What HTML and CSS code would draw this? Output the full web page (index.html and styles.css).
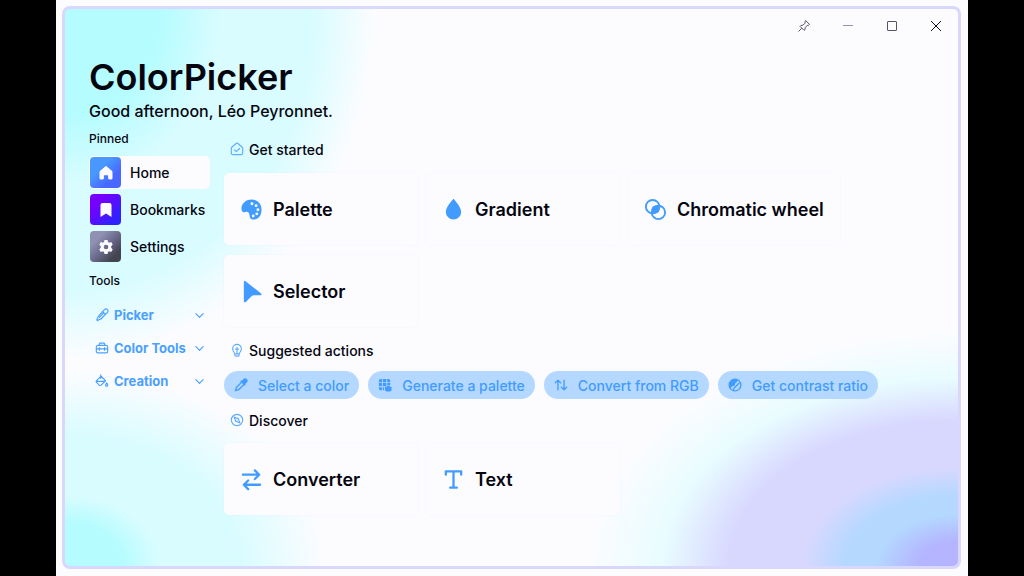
FILE: index.html
```html
<!DOCTYPE html>
<html lang="en">
<head>
<meta charset="utf-8">
<meta name="viewport" content="width=device-width, initial-scale=1">
<title>ColorPicker</title>
<link rel="stylesheet" href="styles.css">
</head>
<body>
<div class="desktop">
<div class="window">
  <div class="titlebar">
    <button class="caption" aria-label="Pin window"><svg viewBox="0 0 14 14"><path d="M8.6 1.5l3.9 3.9-1.1.9-1.2.1-2 2.2-.2 2-1 .7-3.9-3.9.9-1 2-.2 2-2 .1-1.5zM4.9 9.1L1.5 12.5"/></svg></button>
    <button class="caption light" aria-label="Minimize"><svg viewBox="0 0 14 14"><path d="M2 6.5h10"/></svg></button>
    <button class="caption" aria-label="Maximize"><svg viewBox="0 0 14 14"><rect x="2.5" y="2.5" width="9" height="9" rx=".5"/></svg></button>
    <button class="caption dark" aria-label="Close"><svg viewBox="0 0 14 14"><path d="M2 2l10 10M12 2L2 12"/></svg></button>
  </div>
  <header class="intro">
    <h1 class="app-name">ColorPicker</h1>
    <p class="greeting">Good afternoon, Léo Peyronnet.</p>
  </header>
  <div class="layout">
    <nav class="sidebar">
      <h2 class="side-title">Pinned</h2>
      <div class="pages">
        <button class="page active" aria-current="page"><span class="tile home"><svg viewBox="0 0 16 16"><path d="M7.2 1.4a1.2 1.2 0 0 1 1.6 0l5 4.3c.4.4.7.9.7 1.5v6.1c0 .7-.5 1.2-1.2 1.2h-2c-.7 0-1.2-.5-1.2-1.2v-3.1H5.900v3.100c0 .7-.5 1.200-1.200 1.200h-2c-.7 0-1.200-.5-1.200-1.200V7.200c0-.6.3-1.100.7-1.500z"/></svg></span>Home</button>
        <button class="page"><span class="tile bookmarks"><svg viewBox="0 0 16 16"><path d="M4.500 1h7A2 2 0 0 1 13.500 3v12L8 11.500 2.500 15V3a2 2 0 0 1 2-2z"/></svg></span>Bookmarks</button>
        <button class="page"><span class="tile settings"><svg viewBox="0 0 16 16"><path fill-rule="evenodd" d="M6.500 1h3l.5 2.100 1.100.6 2.100-.7 1.500 2.600L13.200 7.200v1.600l1.500 1.600-1.500 2.600-2.100-.7-1.100.6-.5 2.100h-3L6 12.900l-1.100-.6-2.100.7-1.500-2.600 1.500-1.600V7.200L1.300 5.600 2.800 3l2.100.7L6 3.100zM8 5.700a2.300 2.300 0 1 0 0 4.600 2.300 2.300 0 0 0 0-4.600z"/></svg></span>Settings</button>
      </div>
      <h2 class="side-title">Tools</h2>
      <div class="groups">
        <button class="group"><svg class="line" viewBox="0 0 16 16"><path d="M9.200 3.600l1.700-1.800a2.300 2.300 0 0 1 3.300 3.300l-1.800 1.700-5.300 5.500c-.8.8-2 .7-2.700 1l-1.500 1.200-1-1 1.100-1.700c.4-.8.200-1.800 1-2.600zM8.500 3.900l3.600 3.600M9.500 6L5 10.600"/></svg><span class="group-name">Picker</span><svg class="line chevron" viewBox="0 0 10 10"><path d="M1 3l4 4 4-4"/></svg></button>
        <button class="group"><svg class="line" viewBox="0 0 16 16"><path d="M5 5V3.500c0-.6.4-1 1-1h4c.6 0 1 .4 1 1V5M3.500 5h9A2 2 0 0 1 14.500 7v5a1.500 1.500 0 0 1-1.500 1.500H3A1.500 1.500 0 0 1 1.500 12V7a2 2 0 0 1 2-2zM1.500 9h13M5 7.500v3M11 7.500v3"/></svg><span class="group-name">Color Tools</span><svg class="line chevron" viewBox="0 0 10 10"><path d="M1 3l4 4 4-4"/></svg></button>
        <button class="group"><svg class="line" viewBox="0 0 16 16"><path d="M6.500 1v4M7 2.500l5 5.200-5 5c-.7.6-1.300.6-2 0L1.800 9.500c-.6-.6-.6-1.300 0-2L7 2.500M1.800 8.500h9.500M13.300 10.200c1.600 2.200 1.700 3.800 0 3.800s-1.600-1.600 0-3.800z"/></svg><span class="group-name">Creation</span><svg class="line chevron" viewBox="0 0 10 10"><path d="M1 3l4 4 4-4"/></svg></button>
      </div>
    </nav>
    <main class="content">
      <h2 class="section-title"><svg class="line" viewBox="0 0 16 16"><path d="M7 1.700a1.600 1.600 0 0 1 2 0l4.700 4c.5.400.8 1 .8 1.600v5.200a2 2 0 0 1-2 2h-9a2 2 0 0 1-2-2V7.300c0-.6.3-1.200.8-1.600zM5 9l2.200 2 3.800-3.600"/></svg>Get started</h2>
      <div class="cards">
        <button class="card"><svg viewBox="0 0 24 24"><path fill-rule="evenodd" d="M1.500 11C1.500 5 7 1.500 12 1.500c6 0 10.500 4.500 10.500 10.500 0 6.500-3.500 10.500-8 10.500-6 0-3.500-5-5.500-7.200-1.800-2-3.500 0-5.500-.5-1.400-.4-2-2-2-3.800zM12.500 4.500a1.500 1.500 0 1 0 0 3 1.500 1.500 0 0 0 0-3zM16.800 6.500a1.500 1.500 0 1 0 0 3 1.500 1.500 0 0 0 0-3zM18.700 10.800a1.500 1.500 0 1 0 0 3 1.500 1.500 0 0 0 0-3zM17.500 15a1.500 1.500 0 1 0 0 3 1.500 1.500 0 0 0 0-3zM13.800 17.300a1.500 1.500 0 1 0 0 3 1.500 1.500 0 0 0 0-3z"/></svg>Palette</button>
        <button class="card"><svg viewBox="0 0 24 24"><path d="M11.300 1.500c.4-.5 1-.5 1.400 0C15.500 5 20 10 20 14.500a8 8 0 0 1-16 0C4 10 8.500 5 11.300 1.500z"/></svg>Gradient</button>
        <button class="card"><svg viewBox="0 0 24 24"><path d="M15.700 8.300A7 7 0 0 1 8.300 15.700 7 7 0 0 1 15.700 8.300z"/><circle cx="12" cy="12" r="4"/><g class="ring"><circle cx="9" cy="9" r="7"/><circle cx="15" cy="15" r="7"/></g></svg>Chromatic wheel</button>
        <button class="card"><svg viewBox="0 0 24 24"><path d="M4 2c0-1 1-1.400 1.800-.8L22 14c1 .8.500 2-.6 2h-6.800c-1.200 0-2 .4-2.800 1.200L6 23c-.7.800-2 .400-2-.7z"/></svg>Selector</button>
      </div>
      <h2 class="section-title"><svg class="line" viewBox="0 0 16 16"><path d="M5.500 12.500c0-1.500-2.500-3-2.500-6a5 5 0 0 1 10 0c0 3-2.500 4.500-2.500 6zM5.500 12.500v1.300c0 .7.500 1.200 1.200 1.200h2.600c.7 0 1.200-.5 1.200-1.200v-1.300M6.200 7h3.600M8 5v7"/></svg>Suggested actions</h2>
      <div class="actions">
        <button class="action"><svg viewBox="0 0 16 16"><path d="M9 3l1.800-1.800a2.600 2.600 0 0 1 3.900 3.900L13 6.900l.3 1-1 1-5.200-5.200 1-1z"/><path class="stroke" d="M8.500 5L3 10.500c-.8.800-.4 1.700-.8 2.400L1.500 14l.6.600 1.200-.7c.7-.4 1.600 0 2.300-.8L11 7.700"/></svg>Select a color</button>
        <button class="action"><svg viewBox="0 0 16 16"><path d="M1 3a2 2 0 0 1 2-2h1.500v3.500H1zM5.500 1h4v3.500h-4zM10.500 1H12a2 2 0 0 1 2 2v1.500h-3.500zM1 5.500h3.500v4H1zM5.500 5.500h4v4h-4zM10.500 5.500H14V8h-3.500zM1 10.500h3.500V14H3a2 2 0 0 1-2-2zM5.500 10.500H7V14H5.500zM8 10h7.500v3.500a2 2 0 0 1-2 2H10a2 2 0 0 1-2-2zM10.500 8.500h3v2h-3z"/></svg>Generate a palette</button>
        <button class="action"><svg viewBox="0 0 16 16"><path class="stroke" d="M4.500 13.500v-11M1.500 5.500l3-3 3 3M11.500 2.500v11M8.500 10.500l3 3 3-3"/></svg>Convert from RGB</button>
        <button class="action"><svg viewBox="0 0 16 16"><path d="M11 2A6.700 6.700 0 0 0 2.500 11.800L5 9.500c1-.6 1.500 0 2.500-1s0-2 1-2.500S11 4 11 2z"/><path class="stroke" d="M8 1.300a6.700 6.700 0 1 0 0 13.400A6.700 6.700 0 0 0 8 1.300zM6 14l1-2.500L12.500 6"/></svg>Get contrast ratio</button>
      </div>
      <h2 class="section-title"><svg class="line" viewBox="0 0 16 16"><circle cx="8" cy="8" r="6.500"/><path d="M4.700 4.700l4.800 1.700 1.800 4.900-4.800-1.800zM8 8h.1"/></svg>Discover</h2>
      <div class="cards">
        <button class="card"><svg viewBox="0 0 24 24"><path class="stroke" d="M3 7h17M15.500 2.500L20 7l-4.500 4.500M21 17.500H4M8.500 13L4 17.500 8.500 22"/></svg>Converter</button>
        <button class="card"><svg viewBox="0 0 24 24"><path class="stroke" d="M4 7V3.500h16V7M12 3.500v17M8.500 20.500h7"/></svg>Text</button>
      </div>
    </main>
  </div>
</div>
</div>
</body>
</html>
```

FILE: styles.css
```css
* { box-sizing: border-box; }
body {
  margin: 0;
  background: #000;
  color: #050510;
  font-family: Inter, "Open Sans", sans-serif;
}
h1, h2, p { margin: 0; }
button {
  padding: 0;
  border: 0;
  background: none;
  color: inherit;
  font: inherit;
  white-space: nowrap;
}
svg { flex: none; fill: currentColor; }
.line, .stroke, .ring { fill: none; stroke: currentColor; stroke-linecap: round; stroke-linejoin: round; }
.line { stroke-width: 1.3; }
.stroke { stroke-width: 1.5; }
.ring { stroke-width: 2; }

.desktop {
  display: flex;
  min-height: 100vh;
  margin: 0 56px;
  padding: 6px 7px 7px 6px;
  background: #fcfcff;
}
.window {
  flex: 1;
  border: 3px solid #d8d8ff;
  border-radius: 8px;
  background:
    radial-gradient(ellipse 370px 235px at 100% 100%, #b4b4ff 0, #b4b4ff 10%, #b4d8ff 22%, #b4d8ff 30%, #d8d8ff 42%, #d8d8ff 62%, #d8fcff88 80%, #d8fcff00 100%),
    radial-gradient(ellipse 260px 195px at 0 100%, #b4fcff 0, #b4fcff 22%, #d8fcff 36%, #d8fcff 66%, #d8fcff00 100%),
    radial-gradient(ellipse 310px 350px at 0 0, #b4fcff 0, #b4fcff 30%, #d8fcff 50%, #d8fcff 80%, #d8fcff00 100%),
    #fcfcff;
}

.titlebar { display: flex; justify-content: flex-end; }
.caption {
  display: grid;
  place-items: center;
  width: 44px;
  height: 34px;
  color: #55556a;
}
.caption svg { width: 14px; height: 14px; fill: none; stroke: currentColor; }
.caption.light { color: #9090b4; }
.caption.dark { color: #101024; }

.intro { padding: 12px 24px 0; }
.app-name { font-size: 36px; line-height: 44px; font-weight: 600; }
.greeting { font-size: 16px; line-height: 24px; font-weight: 500; }

.layout { display: flex; gap: 14px; padding: 8px 24px 0; }
.sidebar { flex: none; width: 121px; }
.side-title { font-size: 12px; line-height: 16px; font-weight: 500; }
.pages { display: grid; gap: 4px; padding: 9px 0 10px; }
.page {
  display: flex;
  align-items: center;
  gap: 9px;
  height: 33px;
  padding: 0 1px;
  border-radius: 5px;
  font-size: 14px;
  font-weight: 500;
}
.page.active { background: #fcfcff; }
.tile {
  display: grid;
  place-items: center;
  width: 31px;
  height: 31px;
  border-radius: 4px;
  color: #fcfcff;
}
.tile svg { width: 16px; height: 16px; }
.home { background: linear-gradient(135deg, #4898ff 35%, #4868ff 70%); }
.bookmarks { background: linear-gradient(135deg, #7800ff 25%, #3020ff 80%); }
.settings { background: linear-gradient(135deg, #9090b0 25%, #6c6c90 50%, #444450 80%); }

.groups { display: grid; gap: 5px; padding-top: 12px; }
.group {
  display: flex;
  align-items: center;
  gap: 5px;
  height: 28px;
  padding: 0 6px;
  color: #4aa0ff;
  font-size: 13px;
  font-weight: 700;
}
.group svg { width: 14px; height: 14px; }
.group .chevron { width: 9px; height: 9px; }
.group-name { flex: 1; text-align: left; }

.content { flex: 1; min-width: 0; }
.section-title {
  display: flex;
  align-items: center;
  gap: 5px;
  height: 20px;
  margin: 8px 0 14px;
  padding-left: 6px;
  font-size: 14px;
  font-weight: 500;
}
.section-title svg { width: 14px; height: 14px; color: #60acff; }
.cards { display: flex; flex-wrap: wrap; gap: 10px 8px; }
.card {
  display: flex;
  align-items: center;
  gap: 10px;
  min-width: 194px;
  height: 72px;
  padding: 0 16px;
  border-radius: 5px;
  background: #fcfcff;
  box-shadow: 0 0 2px #d8e8ff66;
  font-size: 18px;
  font-weight: 600;
}
.card svg { width: 23px; height: 23px; color: #429cff; }
.card .stroke { stroke-width: 2.4; }
.cards + .section-title { margin: 13px 0 11px; }
.actions { display: flex; flex-wrap: wrap; gap: 9px; }
.actions + .section-title { margin: 11px 0 13px; }
.action {
  display: flex;
  align-items: center;
  gap: 10px;
  height: 28px;
  padding: 0 10px;
  border-radius: 14px;
  background: #b4d8ff;
  color: #429cff;
  font-size: 14px;
  font-weight: 500;
}
.action svg { width: 14px; height: 14px; }
```
